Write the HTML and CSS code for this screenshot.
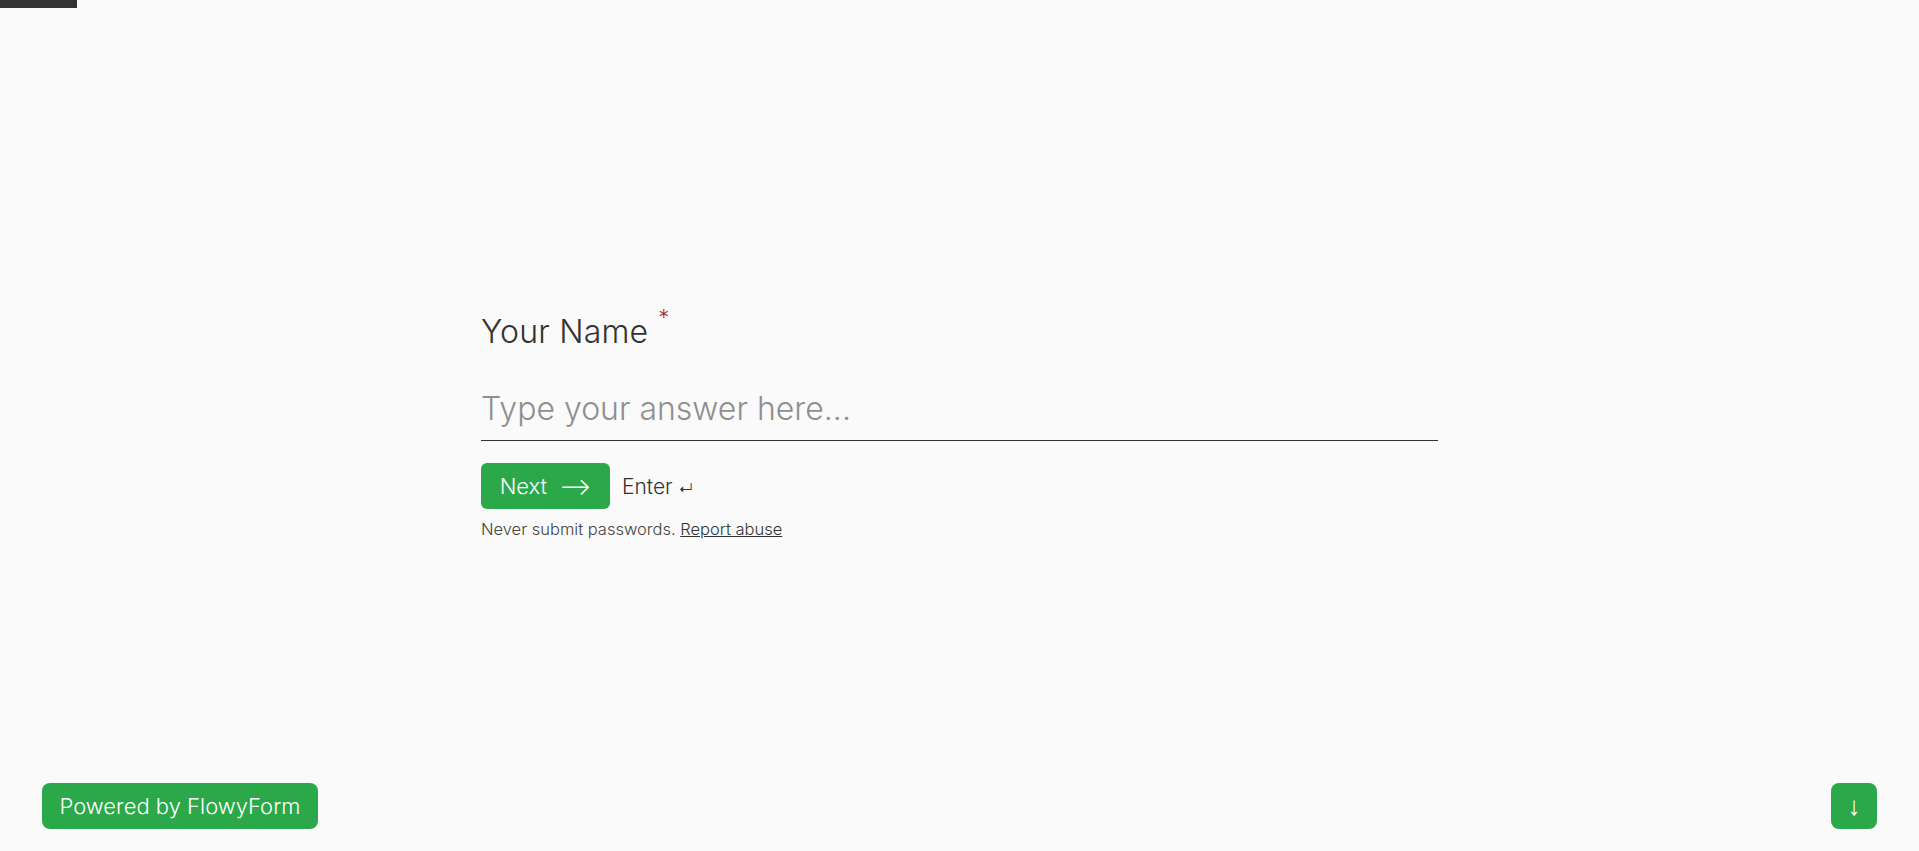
FILE: index.html
```html
<!DOCTYPE html>
<html lang="en">
<head>
    <meta charset="UTF-8">
    <meta name="viewport" content="width=device-width, initial-scale=1.0">
    <title>Your Name - FlowyForm</title>
    <link rel="stylesheet" href="styles.css">
</head>
<body>
    <div class="progress"></div>

    <main class="form-wrap">
        <div class="question">
            <label class="question-title" for="answer">Your Name<span class="required">*</span></label>
            <input class="answer-input" id="answer" type="text" placeholder="Type your answer here...">
            <div class="actions">
                <button class="next-btn">Next <span class="arrow">⟶</span></button>
                <span class="enter-hint">Enter <span class="enter-key">↵</span></span>
            </div>
            <p class="disclaimer">Never submit passwords. <a href="#">Report abuse</a></p>
        </div>
    </main>

    <footer class="footer">
        <a class="powered" href="#">Powered by FlowyForm</a>
        <button class="nav-btn">↓</button>
    </footer>
</body>
</html>
```

FILE: styles.css
```css
body {
    font-family: Inter, 'Noto Sans', sans-serif;
    font-weight: 300;
    margin: 0;
    background: #fafafa;
    color: #333;
    height: 100vh;
    display: flex;
    flex-direction: column;
    overflow: hidden;
}

.progress {
    width: 77px;
    height: 8px;
    background: #333;
    flex-shrink: 0;
}

.form-wrap {
    flex: 1;
    display: flex;
    align-items: center;
    justify-content: center;
    padding-top: 52px;
}

.question {
    width: 957px;
}

.question-title {
    display: block;
    font-size: 32px;
    font-weight: 300;
    color: #333;
    letter-spacing: 0.2px;
}

.required {
    color: #a83232;
    font-size: 22px;
    vertical-align: 18px;
    margin-left: 10px;
}

.answer-input {
    display: block;
    width: 100%;
    box-sizing: border-box;
    margin-top: 38px;
    padding: 0 0 12px;
    border: none;
    border-bottom: 1px solid #333;
    background: transparent;
    font-family: inherit;
    font-weight: 300;
    font-size: 32px;
    color: #333;
    outline: none;
}

.answer-input::placeholder {
    color: #8f8f8f;
}

.actions {
    display: flex;
    align-items: center;
    gap: 12px;
    margin-top: 22px;
}

.next-btn {
    width: 129px;
    height: 46px;
    background: #2aa84a;
    color: white;
    border: none;
    border-radius: 6px;
    font-family: inherit;
    font-weight: 300;
    font-size: 22px;
    cursor: pointer;
    display: flex;
    align-items: center;
    justify-content: center;
    gap: 12px;
}

.arrow {
    font-size: 24px;
}

.enter-hint {
    font-size: 21px;
    font-weight: 300;
    color: #333;
}

.enter-key {
    font-size: 15px;
}

.disclaimer {
    margin: 10px 0 0;
    font-size: 16.5px;
    color: #444;
}

.disclaimer a {
    color: #333;
}

.footer {
    display: flex;
    justify-content: space-between;
    align-items: center;
    padding: 0 42px 22px;
}

.powered {
    display: flex;
    align-items: center;
    justify-content: center;
    width: 276px;
    height: 46px;
    background: #2aa84a;
    color: white;
    text-decoration: none;
    border-radius: 8px;
    font-size: 22px;
    font-weight: 300;
}

.nav-btn {
    width: 46px;
    height: 46px;
    background: #2aa84a;
    color: white;
    border: none;
    border-radius: 8px;
    font-size: 26px;
    cursor: pointer;
}
```
